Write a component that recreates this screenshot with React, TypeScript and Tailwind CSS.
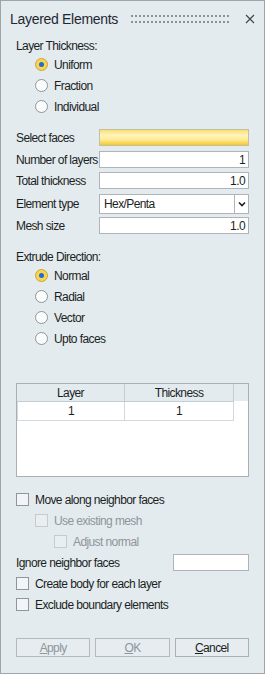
import React from 'react';

function Radio({ label, checked }: { label: string; checked?: boolean }) {
  return (
    <div className="h-[21px] flex items-center pl-[19px] gap-[6px] whitespace-nowrap">
      {checked ? (
        <span className="w-[13px] h-[13px] rounded-full border border-[#c9a43a] bg-[#f7d54e] flex items-center justify-center">
          <span className="w-[5px] h-[5px] rounded-full bg-[#2468d8]" />
        </span>
      ) : (
        <span className="w-[13px] h-[13px] rounded-full border border-[#8e959b] bg-[#fbfcfc]" />
      )}
      <span>{label}</span>
    </div>
  );
}

function Check({ label, indent = 0, disabled }: { label: string; indent?: number; disabled?: boolean }) {
  const pad = indent === 0 ? 'pl-0' : indent === 1 ? 'pl-[19px]' : 'pl-[38px]';
  return (
    <div className={`h-[21px] flex items-center gap-[6px] whitespace-nowrap ${pad}`}>
      <span
        className={
          disabled
            ? 'w-[13px] h-[13px] border border-[#c6cbcf] bg-[#e9eef1]'
            : 'w-[13px] h-[13px] border border-[#8e959b] bg-[#f2f5f7]'
        }
      />
      <span className={disabled ? 'text-[#8e959b]' : ''}>{label}</span>
    </div>
  );
}

function Field({ label, value, mt }: { label: string; value: string; mt: string }) {
  return (
    <div className={`flex items-center h-[17px] ${mt}`}>
      <span className="w-[83px] shrink-0 whitespace-nowrap">{label}</span>
      <div className="flex-1 h-[17px] bg-white border border-[#aeb4b9] flex items-center justify-end pr-[3px]">
        {value}
      </div>
    </div>
  );
}

export default function App() {
  const dots = Array.from({ length: 25 });
  return (
    <div className="w-[265px] h-[674px] bg-[#e4ebef] border border-[#9fa6ab] flex flex-col overflow-hidden font-['Liberation_Sans',Arial,sans-serif] text-[12px] tracking-[-0.6px] text-[#1b1f23]">
      {/* title bar */}
      <div className="h-[36px] shrink-0 flex items-center pl-[9px]">
        <span className="text-[14px] tracking-[-0.3px] text-[#1f2830] whitespace-nowrap">Layered Elements</span>
        <svg width="99" height="8" className="ml-[13px] mt-[-1px]">
          {dots.map((_, i) => (
            <g key={i}>
              <rect x={i * 4} y={0} width={2} height={2} fill="#8d9399" />
              <rect x={i * 4} y={6} width={2} height={2} fill="#8d9399" />
            </g>
          ))}
        </svg>
        <svg width="10" height="10" viewBox="0 0 10 10" className="ml-auto mr-[9px] mt-[-1px]">
          <path d="M1 1 L9 9 M9 1 L1 9" stroke="#3d4349" strokeWidth="1.1" />
        </svg>
      </div>

      <div className="flex flex-col px-[15px]">
        <div className="h-[17px] flex items-center">Layer Thickness:</div>
        <Radio label="Uniform" checked />
        <Radio label="Fraction" />
        <Radio label="Individual" />

        <div className="flex items-center h-[17px] mt-[12px]">
          <span className="w-[83px] shrink-0">Select faces</span>
          <div className="flex-1 h-[17px] border border-[#c3bfa6] bg-[linear-gradient(to_bottom,#fbe06a_0%,#fff3bd_35%,#ffeb96_65%,#f5c827_100%)]" />
        </div>
        <Field label="Number of layers" value="1" mt="mt-[5px]" />
        <Field label="Total thickness" value="1.0" mt="mt-[4px]" />
        <div className="flex items-center h-[20px] mt-[5px]">
          <span className="w-[83px] shrink-0">Element type</span>
          <div className="flex-1 h-[20px] bg-white border border-[#aeb4b9] flex items-center">
            <span className="flex-1 pl-[4px]">Hex/Penta</span>
            <span className="w-[14px] h-full border-l border-[#aeb4b9] flex items-center justify-center">
              <svg width="8" height="6" viewBox="0 0 8 6">
                <path d="M1 1.5 L4 4.5 L7 1.5" fill="none" stroke="#1b1f23" strokeWidth="1.6" />
              </svg>
            </span>
          </div>
        </div>
        <Field label="Mesh size" value="1.0" mt="mt-[3px]" />

        <div className="h-[17px] flex items-center mt-[14px]">Extrude Direction:</div>
        <Radio label="Normal" checked />
        <Radio label="Radial" />
        <Radio label="Vector" />
        <Radio label="Upto faces" />

        {/* layer table */}
        <div className="mt-[34px] h-[94px] border border-[#a9afb4] bg-white flex flex-col">
          <div className="h-[17px] shrink-0 bg-[#e4ebef] flex">
            <div className="w-[108px] border-r border-[#c5cbcf] flex items-center justify-center">Layer</div>
            <div className="w-[109px] border-r border-[#c5cbcf] flex items-center justify-center">Thickness</div>
            <div className="flex-1" />
          </div>
          <div className="w-[217px] h-[20px] flex border border-t-[#c5cbcf] border-x-[#d3d8db] border-b-[#d3d8db]">
            <div className="w-[107px] border-r border-[#d3d8db] flex items-center justify-center">1</div>
            <div className="flex-1 flex items-center justify-center">1</div>
          </div>
        </div>

        <div className="mt-[12px] flex flex-col">
          <Check label="Move along neighbor faces" />
          <Check label="Use existing mesh" indent={1} disabled />
          <Check label="Adjust normal" indent={2} disabled />
          <div className="h-[21px] flex items-center whitespace-nowrap">
            <span>Ignore neighbor faces</span>
            <div className="ml-auto w-[76px] h-[17px] bg-white border border-[#aeb4b9]" />
          </div>
          <Check label="Create body for each layer" />
          <Check label="Exclude boundary elements" />
        </div>

        <div className="mt-[23px] flex gap-[5px]">
          <button className="flex-1 h-[19px] border border-[#b3b9bd] bg-[#e6ecf0] text-[#8e959b] flex items-center justify-center">
            <span className="underline">A</span>pply
          </button>
          <button className="flex-1 h-[19px] border border-[#b3b9bd] bg-[#e6ecf0] text-[#8e959b] flex items-center justify-center">
            <span className="underline">O</span>K
          </button>
          <button className="flex-1 h-[19px] border border-[#aab0b5] bg-[#e6ecf0] flex items-center justify-center">
            <span className="underline">C</span>ancel
          </button>
        </div>
      </div>
    </div>
  );
}
